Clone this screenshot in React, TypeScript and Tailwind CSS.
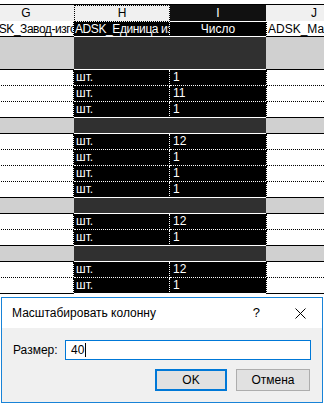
import React from "react";

const groups: number[][] = [
  [1, 11, 1],
  [12, 1, 1, 1],
  [12, 1],
  [12, 1],
];

function GrayBand({ tall }: { tall?: boolean }) {
  const h = tall ? "h-[33px]" : "h-[16px]";
  return (
    <div className={`flex ${h}`}>
      <div className="w-[96px] shrink-0 bg-[#d0d0d0] border-b border-black" />
      <div className="w-[96px] shrink-0 bg-[#303030] border-b border-white" />
      <div className="w-[96px] shrink-0 bg-[#303030] border-b border-white" />
      <div className="w-[96px] shrink-0 bg-[#d0d0d0] border-b border-black" />
    </div>
  );
}

function DataRow({ num, last }: { num: number; last: boolean }) {
  if (last) {
    return (
      <div className="flex h-[16px] text-[12px] leading-[15px]">
        <div className="w-[96px] shrink-0 bg-white border-r border-b border-black border-dotted [border-bottom-style:solid]" />
        <div className="w-[96px] shrink-0 bg-black text-white border-r border-b border-white border-dotted [border-bottom-style:solid] pl-[2px]">
          шт.
        </div>
        <div className="w-[96px] shrink-0 bg-black text-white border-b border-white border-solid pl-[3px]">
          {num}
        </div>
        <div className="w-[96px] shrink-0 bg-white border-l border-b border-black border-dotted [border-bottom-style:solid]" />
      </div>
    );
  }
  return (
    <div className="flex h-[16px] text-[12px] leading-[15px]">
      <div className="w-[96px] shrink-0 bg-white border-r border-b border-black border-dotted" />
      <div className="w-[96px] shrink-0 bg-black text-white border-r border-b border-white border-dotted pl-[2px]">
        шт.
      </div>
      <div className="w-[96px] shrink-0 bg-black text-white border-b border-white border-dotted pl-[3px]">
        {num}
      </div>
      <div className="w-[96px] shrink-0 bg-white border-l border-b border-black border-dotted" />
    </div>
  );
}

export default function App() {
  return (
    <div className="relative w-[324px] h-[405px] overflow-hidden bg-white font-['Liberation_Sans',Arial,sans-serif] text-black">
      <div className="ml-[-22px] w-[384px] flex flex-col">
        <div className="h-[4px] bg-white" />
        <div className="h-[1px] bg-black" />
        {/* column letters */}
        <div className="flex h-[17px] text-[12px] leading-[16px]">
          <div className="w-[96px] shrink-0 bg-[#f0f0f0] border-b border-white text-center">G</div>
          <div className="w-[96px] shrink-0 bg-[#f0f0f0] border border-black border-dotted text-center leading-[15px]">H</div>
          <div className="w-[96px] shrink-0 bg-[#111111] text-white border-b border-white text-center">I</div>
          <div className="w-[96px] shrink-0 bg-[#f0f0f0] border-b border-white text-center">J</div>
        </div>
        {/* field names */}
        <div className="flex h-[15px] text-[12px] leading-[14px]">
          <div className="w-[96px] shrink-0 overflow-hidden whitespace-nowrap tracking-[-0.45px] bg-white border-r border-b border-black border-dotted [border-bottom-style:solid] pl-[5px]">
            ADSK_Завод-изго
          </div>
          <div className="w-[96px] shrink-0 overflow-hidden whitespace-nowrap tracking-[-0.4px] bg-black text-white border-r border-b border-white border-dotted [border-bottom-style:solid] pl-[1px]">
            ADSK_Единица из
          </div>
          <div className="w-[96px] shrink-0 overflow-hidden whitespace-nowrap bg-black text-white border-b border-white text-center">
            Число
          </div>
          <div className="w-[96px] shrink-0 overflow-hidden whitespace-nowrap bg-white border-l border-b border-black border-dotted [border-bottom-style:solid] pl-[1px]">
            ADSK_Мас
          </div>
        </div>
        {groups.map((g, gi) => (
          <React.Fragment key={gi}>
            <GrayBand tall={gi === 0} />
            {g.map((n, i) => (
              <DataRow key={i} num={n} last={i === g.length - 1} />
            ))}
          </React.Fragment>
        ))}
        <div className="h-[20px] bg-white" />
      </div>

      {/* dialog */}
      <div className="absolute left-[1px] top-[297px] w-[322px] h-[106px] border border-[#1883d7] bg-[#f0f0f0] flex flex-col text-[12px]">
        <div className="h-[30px] shrink-0 bg-white flex items-center pl-[10px] pr-[16px]">
          <span className="leading-[14px]">Масштабировать колонну</span>
          <span className="ml-auto text-[13px] leading-[14px]">?</span>
          <svg className="ml-[35px]" width="11" height="11" viewBox="0 0 11 11">
            <path d="M0.5 0.5 L10.5 10.5 M10.5 0.5 L0.5 10.5" stroke="#000" strokeWidth="1" fill="none" />
          </svg>
        </div>
        <div className="flex items-center mt-[12px] pl-[11px]">
          <span className="w-[52px] shrink-0 leading-[14px]">Размер:</span>
          <div className="w-[246px] h-[20px] border border-[#0078d7] bg-white flex items-center pl-[5px]">
            <span className="leading-[14px]">40</span>
            <span className="w-[1px] h-[14px] bg-black ml-[1px]" />
          </div>
        </div>
        <div className="flex justify-end gap-[9px] mt-[9px] pr-[12px]">
          <div className="w-[72px] h-[22px] border-2 border-[#0078d7] bg-[#e1e1e1] flex items-center justify-center leading-[14px]">
            OK
          </div>
          <div className="w-[74px] h-[22px] border border-[#adadad] bg-[#e1e1e1] flex items-center justify-center leading-[14px]">
            Отмена
          </div>
        </div>
      </div>
    </div>
  );
}
